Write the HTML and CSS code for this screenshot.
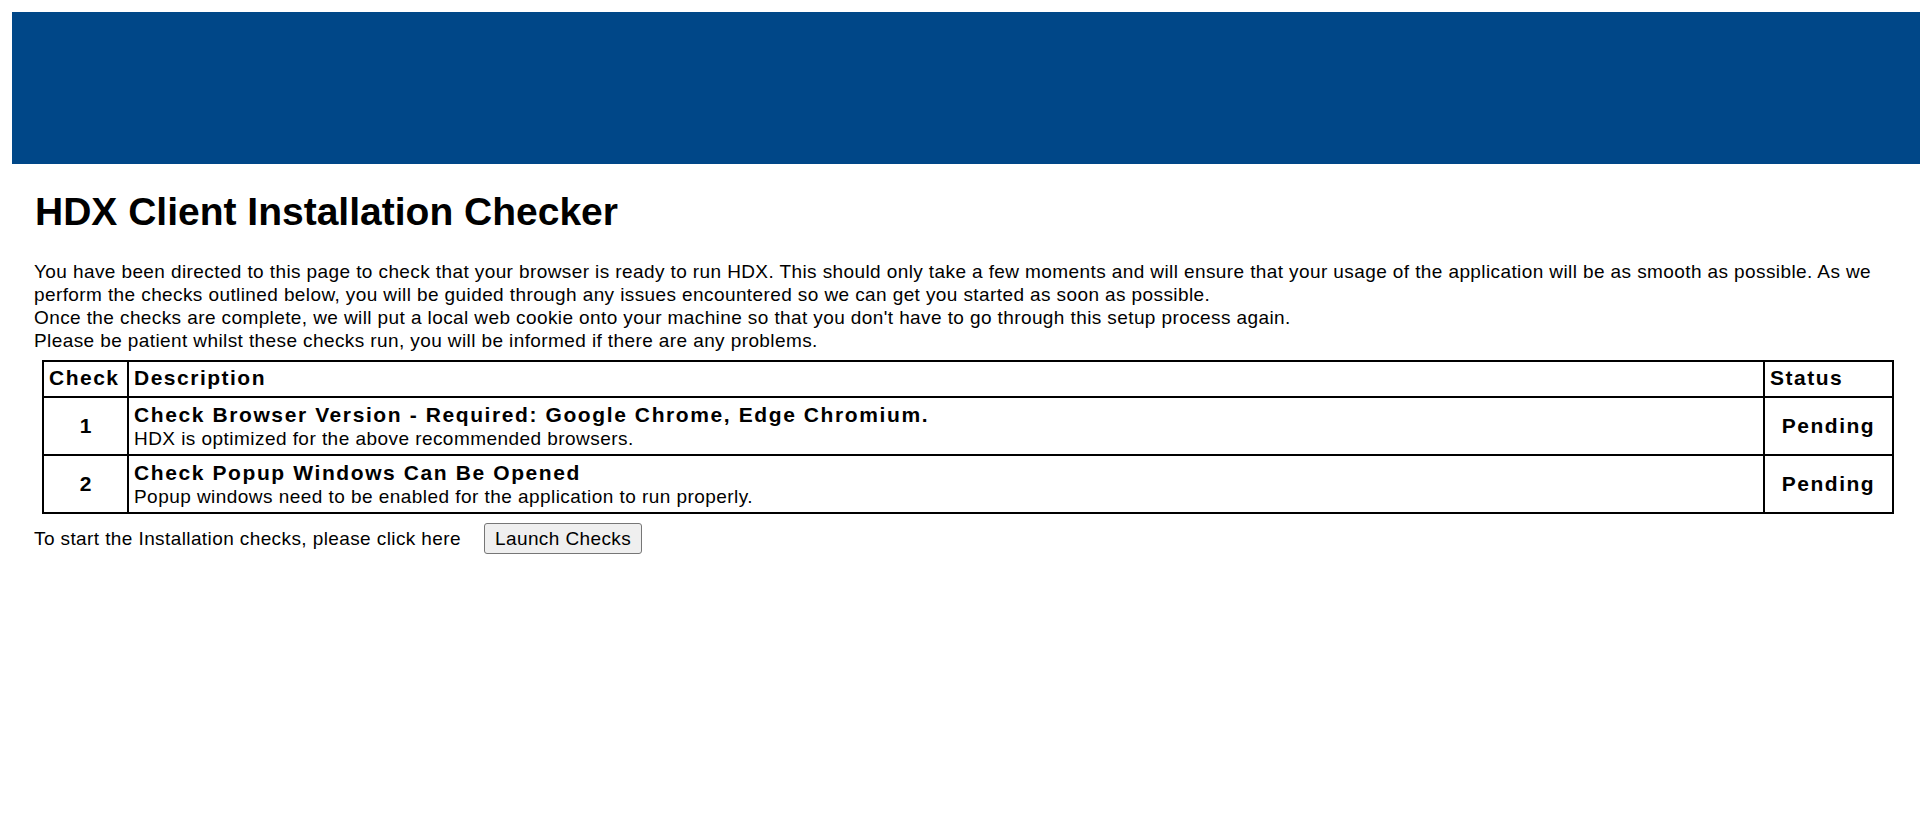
FILE: index.html
```html
<!DOCTYPE html>
<html lang="en">
<head>
<meta charset="utf-8">
<title>HDX Client Installation Checker</title>
<link rel="stylesheet" href="styles.css">
</head>
<body>
<header class="banner"></header>
<main class="content">
  <h1 class="title">HDX Client Installation Checker</h1>
  <p class="intro">You have been directed to this page to check that your browser is ready to run HDX. This should only take a few moments and will ensure that your usage of the application will be as smooth as possible. As we perform the checks outlined below, you will be guided through any issues encountered so we can get you started as soon as possible.<br>Once the checks are complete, we will put a local web cookie onto your machine so that you don't have to go through this setup process again.<br>Please be patient whilst these checks run, you will be informed if there are any problems.</p>
  <table class="checks">
    <thead>
      <tr>
        <th class="col-check">Check</th>
        <th class="col-desc">Description</th>
        <th class="col-status">Status</th>
      </tr>
    </thead>
    <tbody>
      <tr>
        <td class="num">1</td>
        <td class="desc"><div class="desc-title">Check Browser Version - Required: Google Chrome, Edge Chromium.</div><div class="desc-text">HDX is optimized for the above recommended browsers.</div></td>
        <td class="status">Pending</td>
      </tr>
      <tr>
        <td class="num">2</td>
        <td class="desc"><div class="desc-title">Check Popup Windows Can Be Opened</div><div class="desc-text">Popup windows need to be enabled for the application to run properly.</div></td>
        <td class="status">Pending</td>
      </tr>
    </tbody>
  </table>
  <div class="launch">
    <span class="launch-text">To start the Installation checks, please click here</span>
    <button class="launch-btn" type="button">Launch Checks</button>
  </div>
</main>
</body>
</html>
```

FILE: styles.css
```css
html, body {
  margin: 0;
  padding: 0;
  background: #ffffff;
}

body {
  font-family: "Liberation Sans", Arial, sans-serif;
  color: #000000;
}

.banner {
  display: block;
  margin: 12px 0 0 12px;
  height: 152px;
  background: #004788;
}

.content {
  padding: 0 26px 0 34px;
}

.title {
  margin: 26px 0 0 1px;
  font-size: 39px;
  line-height: 44px;
  font-weight: bold;
}

.intro {
  margin: 26px 0 0 0;
  font-size: 19px;
  letter-spacing: 0.4px;
  line-height: 23px;
}

.checks {
  margin: 8px 0 0 8px;
  width: calc(100% - 8px);
  border-collapse: collapse;
  border: 2px solid #000;
}

.checks th,
.checks td {
  border: 2px solid #000;
}

.checks th {
  text-align: left;
  font-size: 21px;
  line-height: 24px;
  font-weight: bold;
  letter-spacing: 1.5px;
  padding: 4px 5px 6px 5px;
}

.col-check { width: 73px; }
.col-status { width: 117px; }

.checks td {
  padding: 4px 5px 5px 5px;
  vertical-align: middle;
}

.num {
  text-align: center;
  font-size: 21px;
  font-weight: bold;
}

.desc-title {
  font-size: 21px;
  line-height: 26px;
  font-weight: bold;
  letter-spacing: 1.6px;
}

.desc-text {
  font-size: 19px;
  letter-spacing: 0.45px;
  line-height: 21px;
}

.status {
  text-align: center;
  font-size: 21px;
  font-weight: bold;
  letter-spacing: 1.5px;
}

.launch {
  display: flex;
  align-items: center;
  gap: 23px;
  margin-top: 9px;
}

.launch-text {
  font-size: 19px;
  letter-spacing: 0.4px;
}

.launch-btn {
  font-family: "Liberation Sans", Arial, sans-serif;
  font-size: 19px;
  letter-spacing: 0.4px;
  height: 31px;
  padding: 0 10px;
  background: #efefef;
  border: 1px solid #767676;
  border-radius: 3px;
  color: #000;
}
```
